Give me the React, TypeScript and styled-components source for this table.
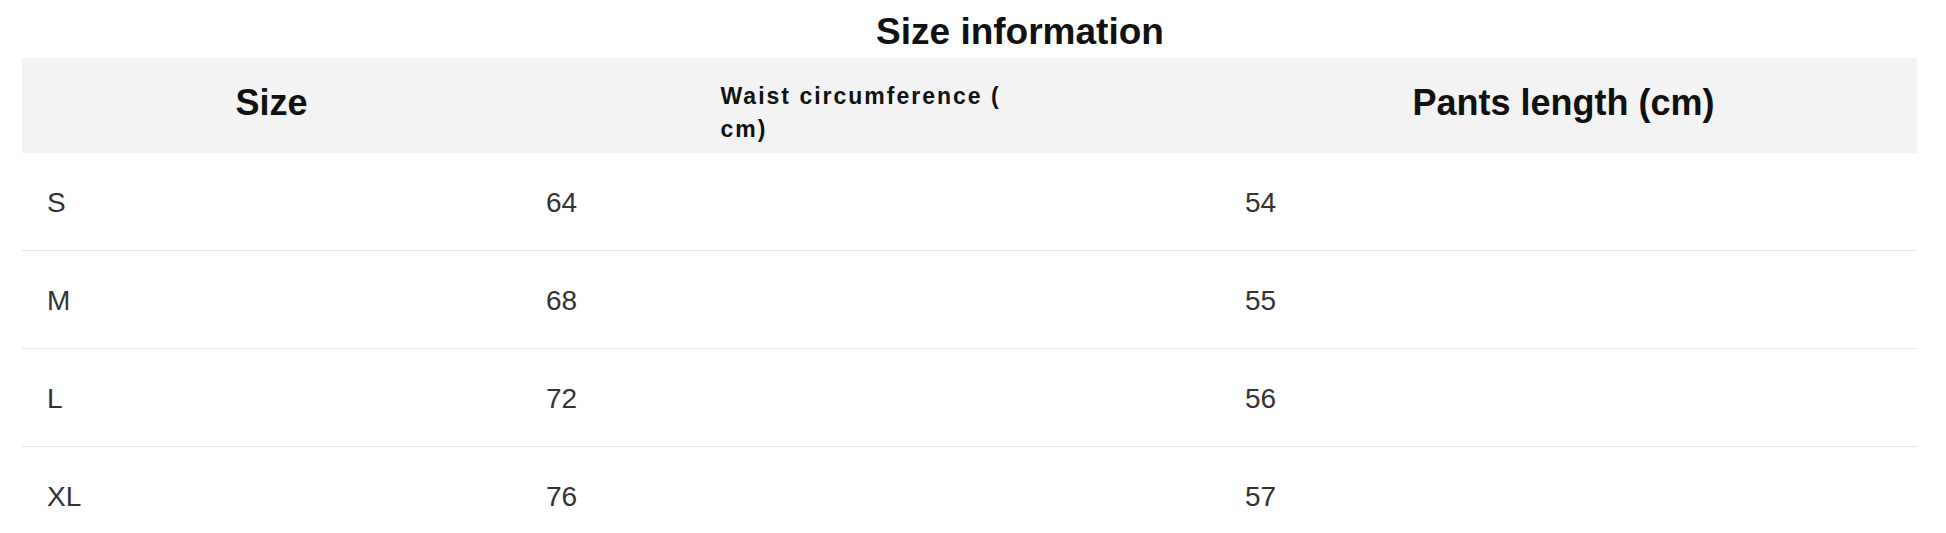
import { createGlobalStyle, styled } from 'styled-components';

type SizeRow = {
  size: string;
  waist: number;
  length: number;
};

const rows: SizeRow[] = [
  { size: 'S', waist: 64, length: 54 },
  { size: 'M', waist: 68, length: 55 },
  { size: 'L', waist: 72, length: 56 },
  { size: 'XL', waist: 76, length: 57 }
];

const App = () => {
  return (
    <>
      <GlobalStyle />
      <Page>
        <Title>Size information</Title>
        <Table>
          <HeadRow>
            <HeadCell>Size</HeadCell>
            <HeadCell>
              <SmallHead>
                Waist circumference (<br />
                cm)
              </SmallHead>
            </HeadCell>
            <HeadCell $shift={-10}>Pants length (cm)</HeadCell>
          </HeadRow>
          {rows.map((row) => (
            <BodyRow key={row.size}>
              <Cell>{row.size}</Cell>
              <Cell>{row.waist}</Cell>
              <Cell>{row.length}</Cell>
            </BodyRow>
          ))}
        </Table>
      </Page>
    </>
  );
};

export default App;

const GlobalStyle = createGlobalStyle`
  html, body {
    margin: 0;
    padding: 0;
    background: #ffffff;
  }
  body {
    font-family: 'Liberation Sans', Arial, sans-serif;
  }
`;

const Page = styled.div`
  width: 1946px;
  height: 533px;
  overflow: hidden;
  background: #ffffff;
`;

const Title = styled.div`
  height: 58px;
  display: flex;
  align-items: center;
  justify-content: center;
  padding-left: 94px;
  padding-top: 6px;
  box-sizing: border-box;
  font-size: 37px;
  font-weight: bold;
  color: #111111;
`;

const Table = styled.div`
  width: 1895px;
  margin-left: 22px;
`;

const HeadRow = styled.div`
  display: grid;
  grid-template-columns: 499px 699px 1fr;
  height: 95px;
  background: #f3f3f3;
`;

const HeadCell = styled.div<{ $shift?: number }>`
  display: flex;
  align-items: center;
  justify-content: center;
  font-size: 36px;
  font-weight: bold;
  color: #111111;
  padding-bottom: 6px;
  margin-left: ${(props) => props.$shift ?? 0}px;
`;

const SmallHead = styled.div`
  width: 302px;
  font-size: 23px;
  letter-spacing: 2px;
  line-height: 33px;
  text-align: left;
  margin-left: 2px;
  padding-top: 20px;
`;

const BodyRow = styled.div`
  display: grid;
  grid-template-columns: 499px 699px 1fr;
  height: 97px;
  border-bottom: 1px solid #e4e4e4;
  &:first-of-type {
    margin-top: 1px;
  }
`;

const Cell = styled.div`
  display: flex;
  align-items: center;
  padding-left: 25px;
  padding-top: 3px;
  font-size: 28px;
  color: #333333;
`;
